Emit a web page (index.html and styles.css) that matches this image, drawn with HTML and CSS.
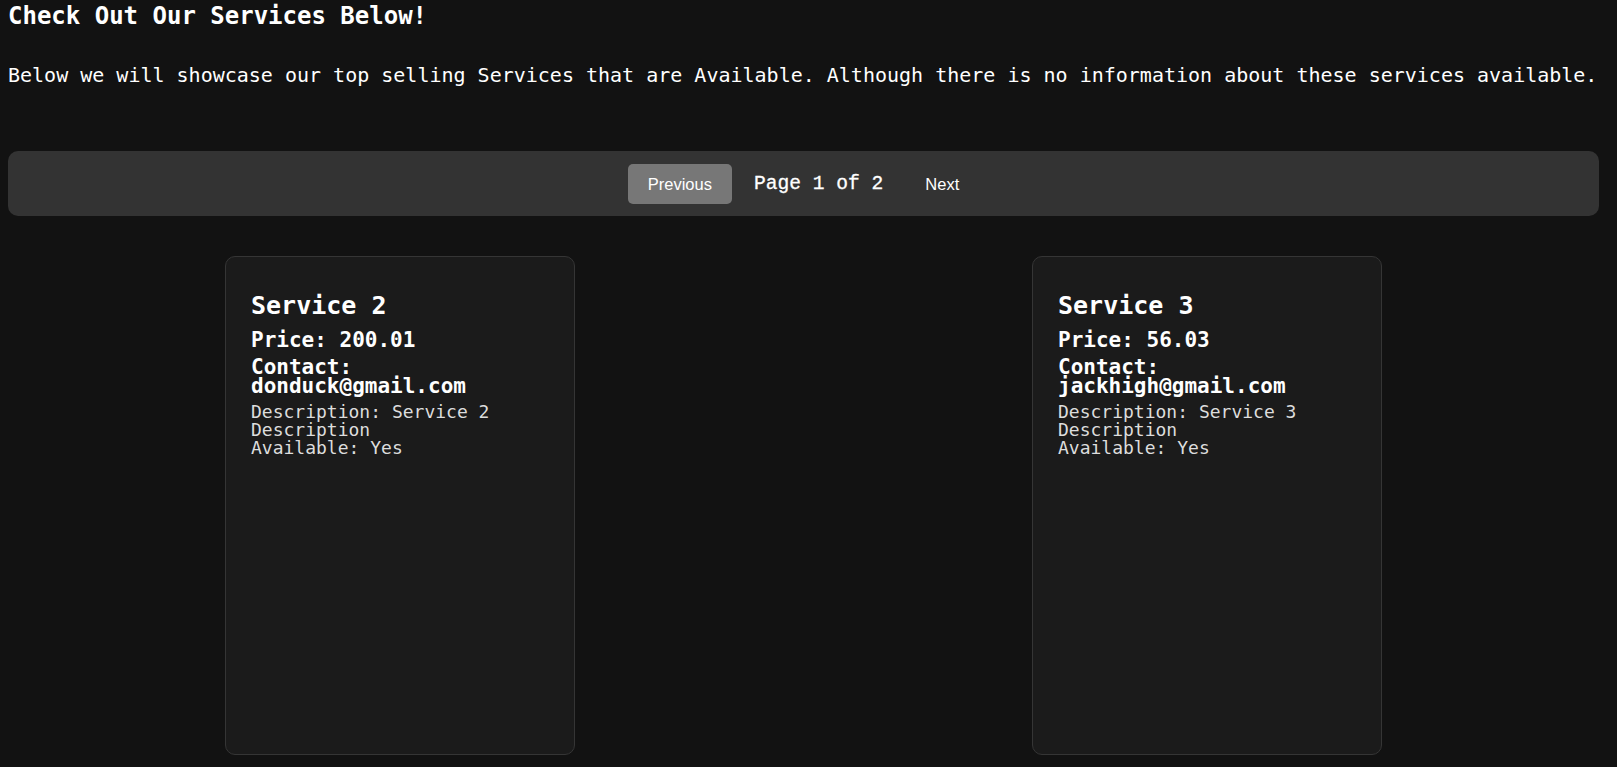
FILE: index.html
```html
<!DOCTYPE html>
<html lang="en">
<head>
<meta charset="utf-8">
<title>Services</title>
<link rel="stylesheet" href="styles.css">
</head>
<body>
  <h1 class="page-title">Check Out Our Services Below!</h1>
  <p class="page-intro">Below we will showcase our top selling Services that are Available. Although there is no information about these services available.</p>

  <nav class="pager">
    <button class="pager-btn pager-btn-active" type="button">Previous</button>
    <span class="pager-label">Page 1 of 2</span>
    <button class="pager-btn" type="button">Next</button>
  </nav>

  <section class="cards">
    <article class="card">
      <h2 class="card-title">Service 2</h2>
      <p class="card-price">Price: 200.01</p>
      <p class="card-contact">Contact: donduck@gmail.com</p>
      <p class="card-desc">Description: Service 2 Description</p>
      <p class="card-desc">Available: Yes</p>
    </article>
    <article class="card">
      <h2 class="card-title">Service 3</h2>
      <p class="card-price">Price: 56.03</p>
      <p class="card-contact">Contact: jackhigh@gmail.com</p>
      <p class="card-desc">Description: Service 3 Description</p>
      <p class="card-desc">Available: Yes</p>
    </article>
  </section>
</body>
</html>
```

FILE: styles.css
```css
html {
  background: #121212;
}

body {
  margin: 0 18px 0 8px;
  padding-top: 1px;
  background: #121212;
  color: #ffffff;
  font-family: "DejaVu Sans Mono", "Liberation Mono", monospace;
  overflow: hidden;
}

.page-title {
  margin: 0;
  font-size: 24px;
  line-height: 30px;
  font-weight: bold;
}

.page-intro {
  margin: 32px 0 0;
  font-size: 20px;
  line-height: 24px;
  white-space: nowrap;
}

.pager {
  margin-top: 64px;
  background: #333333;
  border-radius: 10px;
  padding: 12.5px 0;
  display: flex;
  justify-content: center;
  align-items: center;
  gap: 22px;
}

.pager-btn {
  font-family: "Liberation Sans", Arial, sans-serif;
  font-size: 16.5px;
  line-height: 20px;
  color: #ffffff;
  background: transparent;
  border: none;
  border-radius: 5px;
  padding: 10px 20px;
  height: 40px;
  cursor: pointer;
}

.pager-btn-active {
  background: #777777;
}

.pager-label {
  font-family: "Liberation Mono", "DejaVu Sans Mono", monospace;
  font-size: 19.6px;
  line-height: 24px;
  color: #ffffff;
  -webkit-text-stroke: 0.3px #ffffff;
}

.cards {
  margin-top: 40px;
  display: grid;
  grid-template-columns: 1fr 1fr;
  column-gap: 23px;
  justify-items: center;
}

.card {
  box-sizing: border-box;
  width: 350px;
  height: 499px;
  background: #1b1b1b;
  border: 1px solid #353535;
  border-radius: 10px;
  padding: 34px 25px;
}

.card-title {
  margin: 0;
  font-size: 25px;
  line-height: 30px;
  font-weight: bold;
}

.card-price {
  margin: 7px 0 0;
  font-size: 21px;
  line-height: 24px;
  font-weight: bold;
}

.card-contact {
  margin: 6px 0 0;
  font-size: 21px;
  line-height: 19.4px;
  font-weight: bold;
}

.card-desc {
  margin: 0;
  font-size: 18px;
  line-height: 17.8px;
  color: #dddddd;
}

.card-contact + .card-desc {
  margin-top: 6.5px;
}
```
